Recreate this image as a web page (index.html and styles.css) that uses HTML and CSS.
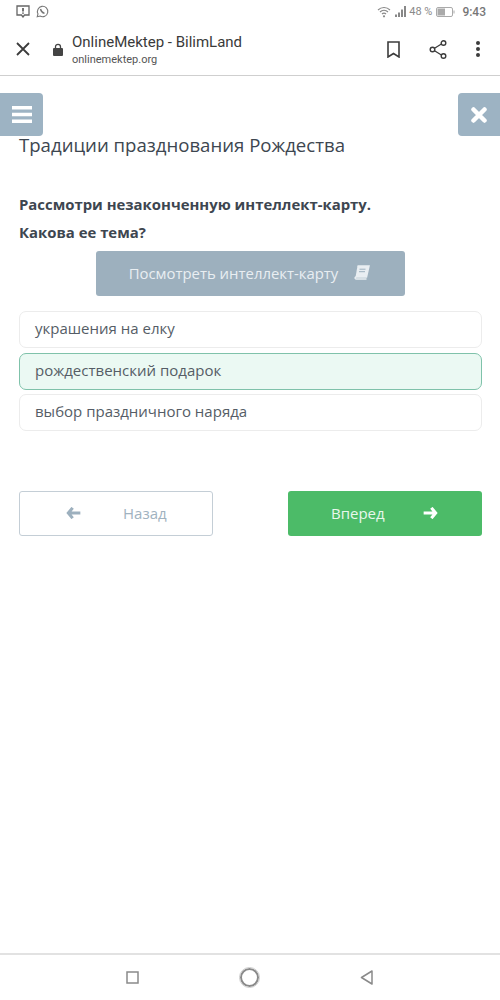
FILE: index.html
```html
<!DOCTYPE html>
<html lang="en">
<head>
  <meta charset="UTF-8" />
  <meta name="viewport" content="width=device-width, initial-scale=1.0"/>
  <title>OnlineMektep - BilimLand</title>
  <link rel="stylesheet" href="styles.css">
</head>
<body>
  <div class="status-bar">
    <div class="status-left">
      <svg width="14" height="13" viewBox="0 0 14 13"><path d="M1 1h12v9H8.500L7 12 5.500 10H1z" fill="none" stroke="#666" stroke-width="1.300"/><path d="M7 3v3.500M7 7.500v1.300" stroke="#444" stroke-width="1.500"/></svg>
      <svg width="13" height="13" viewBox="0 0 13 13"><path d="M1.200 11.800l.8-2.900a5.200 5.200 0 1 1 2 2.100z" fill="none" stroke="#777" stroke-width="1.100"/><path d="M4.500 4c.5 2.300 1.800 3.700 4 4.400" fill="none" stroke="#777" stroke-width="1.400"/></svg>
    </div>
    <div class="status-right">
      <svg width="14" height="12" viewBox="0 0 14 12"><path d="M1 4a8.500 8.500 0 0 1 12 0M3 6a5.600 5.600 0 0 1 8 0M5 8a2.800 2.800 0 0 1 4 0" fill="none" stroke="#888" stroke-width="1.100"/><circle cx="7" cy="10.300" r="1.100" fill="#888"/></svg>
      <svg class="signal" width="12" height="11" viewBox="0 0 12 11"><path d="M1 8.500h2V11H1zM4 6.500h2V11H4zM7 3.500h2V11H7zM10 0h2v11h-2z" fill="#888"/></svg>
      <span class="battery-text">48 %</span>
      <svg width="19" height="10" viewBox="0 0 19 10"><rect x=".5" y=".5" width="16" height="9" rx="1.500" fill="none" stroke="#aaa"/><rect x="1.500" y="1.500" width="7.500" height="7" fill="#aaa"/><path d="M18 3.500v3" stroke="#aaa"/></svg>
      <span class="clock">9:43</span>
    </div>
  </div>

  <header class="toolbar">
    <svg class="close-icon" width="14" height="14" viewBox="0 0 14 14"><path d="M1 1l12 12M13 1L1 13" stroke="#3c3c3c" stroke-width="1.800"/></svg>
    <svg class="lock-icon" width="10" height="13" viewBox="0 0 10 13"><path d="M2.500 6V3.800a2.500 2.500 0 0 1 5 0V6" fill="none" stroke="#444" stroke-width="1.300"/><rect y="5" width="10" height="8" rx="1" fill="#444"/></svg>
    <div class="page-info">
      <div class="page-title">OnlineMektep - BilimLand</div>
      <div class="page-url">onlinemektep.org</div>
    </div>
    <div class="toolbar-actions">
      <svg width="13" height="17" viewBox="0 0 13 17"><path d="M1 1h11v15l-5.500-3.500L1 16z" fill="none" stroke="#3c3c3c" stroke-width="1.600"/></svg>
      <svg width="18" height="19" viewBox="0 0 18 19"><path d="M3.500 9.500L14 3M3.500 9.500L14 16" stroke="#3c3c3c" stroke-width="1.300"/><circle cx="3.500" cy="9.500" r="2.300" fill="#fff" stroke="#3c3c3c" stroke-width="1.400"/><circle cx="14.500" cy="3" r="2.300" fill="#fff" stroke="#3c3c3c" stroke-width="1.400"/><circle cx="14.500" cy="16" r="2.300" fill="#fff" stroke="#3c3c3c" stroke-width="1.400"/></svg>
      <svg width="4" height="16" viewBox="0 0 4 16"><circle cx="2" cy="2" r="2" fill="#3c3c3c"/><circle cx="2" cy="8" r="2" fill="#3c3c3c"/><circle cx="2" cy="14" r="2" fill="#3c3c3c"/></svg>
    </div>
  </header>

  <main class="content">
    <button class="side-btn side-menu">
      <svg width="20" height="17" viewBox="0 0 20 17"><path d="M0 0h20v3.500H0zM0 6.700h20v3.500H0zM0 13.400h20V17H0z" fill="#fff"/></svg>
    </button>
    <button class="side-btn side-close">
      <svg width="16" height="16" viewBox="0 0 16 16"><path d="M2.500 2.500l11 11M13.500 2.500l-11 11" stroke="#fff" stroke-width="4.500" stroke-linecap="round"/></svg>
    </button>

    <h1 class="lesson-title">Традиции празднования Рождества</h1>
    <p class="question">Рассмотри незаконченную интеллект-карту.</p>
    <p class="question question-second">Какова ее тема?</p>

    <button class="map-btn">
      <span>Посмотреть интеллект-карту</span>
      <svg width="17" height="15" viewBox="0 0 17 15"><path d="M4.500 1H16l-2.500 11H3.500C2 12 1.500 13.500 3 14h10.500" fill="none" stroke="#e9eef2" stroke-width="1.500"/><path d="M4.500 1H16l-2.500 11H2.500z" fill="#e9eef2"/><path d="M6.500 4.200h6M6 6.700h6" stroke="#9db0be"/></svg>
    </button>

    <div class="options">
      <div class="option">украшения на елку</div>
      <div class="option option-selected">рождественский подарок</div>
      <div class="option">выбор праздничного наряда</div>
    </div>

    <div class="nav-buttons">
      <button class="nav-btn nav-back">
        <svg width="15" height="12" viewBox="0 0 16 14"><path d="M7 1L2 7l5 6M3 7h13" fill="none" stroke="#9db0be" stroke-width="3.600"/></svg>
        <span>Назад</span>
      </button>
      <button class="nav-btn nav-next">
        <span>Вперед</span>
        <svg width="15" height="12" viewBox="0 0 16 14"><path d="M9 1l5 6-5 6M13 7H0" fill="none" stroke="#fff" stroke-width="3.600"/></svg>
      </button>
    </div>
  </main>

  <footer class="system-nav">
    <svg width="13" height="13" viewBox="0 0 13 13"><rect x="1" y="1" width="11" height="11" fill="none" stroke="#8a8a8a" stroke-width="1.500"/></svg>
    <svg width="21" height="21" viewBox="0 0 21 21"><circle cx="10.500" cy="10.500" r="8.500" fill="none" stroke="#8a8a8a" stroke-width="2"/><circle cx="10.500" cy="10.500" r="10" fill="none" stroke="#ccc"/></svg>
    <svg width="13" height="15" viewBox="0 0 13 15"><path d="M12 1L1.500 7.500 12 14z" fill="none" stroke="#8a8a8a" stroke-width="1.500" stroke-linejoin="round"/></svg>
  </footer>
</body>
</html>
```
FILE: styles.css
```css
body {
  margin: 0;
  height: 1000px;
  display: flex;
  flex-direction: column;
  background: #fff;
  font-family: 'Open Sans', sans-serif;
  overflow: hidden;
}

.status-bar {
  height: 23px;
  flex: none;
  display: flex;
  justify-content: space-between;
  align-items: center;
  padding: 0 16px;
  font-family: Roboto, sans-serif;
  color: #8a8a8a;
}

.status-left,
.status-right {
  display: flex;
  align-items: center;
}

.status-left {
  gap: 6px;
}

.status-right {
  gap: 3px;
  margin-right: -2px;
}

.battery-text {
  font-size: 11px;
  margin-right: 1px;
}

.clock {
  font-size: 12px;
  font-weight: 500;
  color: #777;
  margin-left: 4px;
}

.toolbar {
  height: 52px;
  flex: none;
  display: flex;
  align-items: center;
  padding: 0 20px 0 16px;
  border-bottom: 1px solid #cfcfcf;
  box-sizing: content-box;
}

.lock-icon {
  margin-left: 23px;
  margin-top: 1px;
}

.page-info {
  margin-left: 9px;
  margin-top: 1px;
}

.page-title {
  font-family: Roboto, sans-serif;
  font-size: 15px;
  line-height: 20px;
  color: #3a3a3a;
}

.page-url {
  font-family: Roboto, sans-serif;
  font-size: 11px;
  line-height: 15px;
  color: #555;
}

.toolbar-actions {
  margin-left: auto;
  display: flex;
  align-items: center;
  gap: 29px;
}

.content {
  flex: 1;
  position: relative;
  padding: 57px 18px 0 19px;
}

.side-btn {
  position: absolute;
  top: 17px;
  width: 43px;
  height: 43px;
  border: none;
  padding: 0;
  background: #9db3c3;
  display: flex;
  align-items: center;
  justify-content: center;
}

.side-menu {
  left: 0;
  border-radius: 0 4px 4px 0;
}

.side-close {
  right: 0;
  width: 42px;
  border-radius: 4px 0 0 4px;
}

.lesson-title {
  margin: 0;
  font-size: 18.600px;
  font-weight: 400;
  line-height: 24px;
  color: #3d4650;
}

.question {
  margin: 37px 0 0;
  font-size: 14.900px;
  font-weight: 700;
  line-height: 20px;
  color: #3d4650;
}

.question-second {
  margin-top: 8px;
}

.map-btn {
  display: flex;
  align-items: center;
  justify-content: center;
  gap: 15px;
  width: 309px;
  height: 45px;
  margin: 9px 0 0 77px;
  padding: 0 2px 2px 0;
  border: none;
  border-radius: 3px;
  background: #9db0be;
  color: #e9eef2;
  font-family: 'Open Sans', sans-serif;
  font-size: 14.900px;
}

.options {
  margin-top: 15px;
  display: flex;
  flex-direction: column;
  gap: 4.500px;
}

.option {
  height: 37px;
  box-sizing: border-box;
  padding-left: 15px;
  border: 1px solid #ececec;
  border-radius: 7px;
  font-size: 15px;
  line-height: 32px;
  color: #555d66;
}

.option-selected {
  border-color: #7fc2aa;
  background: #ebf9f3;
}

.nav-buttons {
  margin-top: 60px;
  display: flex;
  justify-content: space-between;
}

.nav-btn {
  width: 194px;
  height: 45px;
  box-sizing: border-box;
  border-radius: 3px;
  display: flex;
  align-items: center;
  font-family: 'Open Sans', sans-serif;
  font-size: 15px;
  padding: 0 0 2px;
}

.nav-back {
  border: 1px solid #c4ced6;
  background: #fff;
  color: #a0b2c0;
  padding-left: 46px;
  gap: 42px;
}

.nav-next {
  border: none;
  background: #4cbb68;
  color: #e8f7ec;
  padding-left: 43px;
  gap: 38px;
}

.system-nav {
  height: 45px;
  flex: none;
  border-top: 2px solid #e2e2e2;
  display: flex;
  align-items: center;
  justify-content: center;
  gap: 100px;
  padding-right: 2px;
}
```
